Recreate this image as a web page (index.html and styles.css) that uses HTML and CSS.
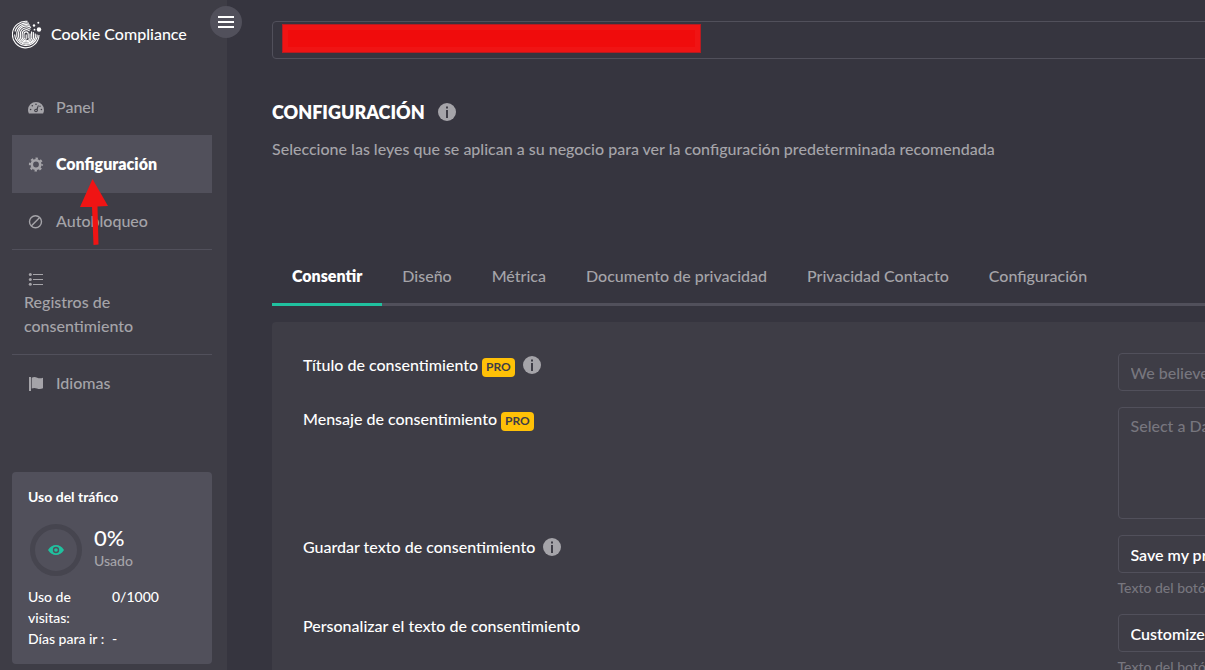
FILE: index.html
```html
<!DOCTYPE html>
<html lang="es">
  <head>
    <meta charset="UTF-8" />
    <meta name="viewport" content="width=device-width, initial-scale=1.0" />
    <title>Cookie Compliance</title>
    <link rel="stylesheet" href="styles.css" />
  </head>
  <body>
    <!-- shared icons -->
    <svg class="sprite" aria-hidden="true">
      <symbol id="icon-info" viewBox="0 0 18 18">
        <circle cx="9" cy="9" r="9" fill="#a5a4a9" />
        <path d="M8 3.500h2v2H8zM8 7h2v8H8z" fill="#3e3d46" />
      </symbol>
    </svg>

    <div class="layout">
      <aside class="sidebar">
        <div class="brand">
          <svg class="brand-logo" viewBox="0 0 30 30" fill="none" stroke="#fff" stroke-width="1.100">
            <path d="M15.500 2.400A13.300 13.300 0 1 0 27 16" />
            <path d="M17 4.300A11.500 11.500 0 0 0 3 12.500M2.600 15.500A11.500 11.500 0 0 0 25.200 18L25 15.500" />
            <path d="M18 6.300A9.600 9.600 0 0 0 4.800 13.500v4A9.600 9.600 0 0 0 23.400 18.500L23.200 14.500" />
            <path d="M19 8.500A7.800 7.800 0 0 0 6.600 13.500v4.500A7.800 7.800 0 0 0 21.600 19L21.300 13" />
            <path d="M18.500 10.400A6 6 0 0 0 8.400 14.500v4A6 6 0 0 0 19.800 19L19.500 12.500" />
            <path d="M17.600 12.200A4.200 4.200 0 0 0 10.200 15v3.500A4.200 4.200 0 0 0 18 19.500V14.500" />
            <path d="M16.200 19.500v-4.500a2.100 2.100 0 0 0-4.200 0V18.500a1.500 1.500 0 0 0 2.200 1.500V15.500" />
            <g fill="#fff" stroke="none">
              <circle cx="27" cy="10.500" r="2.200" />
              <circle cx="22" cy="6.500" r="1.200" />
              <circle cx="26.300" cy="3.800" r="1" />
              <circle cx="22.500" cy="10.700" r=".9" />
            </g>
          </svg>
          <span>Cookie Compliance</span>
        </div>

        <button class="menu-toggle" type="button" aria-label="Menú">
          <svg viewBox="0 0 16 12" fill="#fff">
            <path d="M0 0h16v2H0zM0 5h16v2H0zM0 10h16v2H0z" />
          </svg>
        </button>

        <nav class="side-nav">
          <a class="nav-item" href="#">
            <svg class="nav-icon" viewBox="0 0 16 16">
              <path d="M8 3a8 8 0 0 0-8 8c0 1.300.3 2.400.9 3.400h14.200c.6-1 .9-2.100.9-3.400a8 8 0 0 0-8-8z" fill="currentColor" />
              <g fill="#3e3d46">
                <circle cx="8" cy="5.300" r=".8" />
                <circle cx="4.300" cy="6.800" r=".8" />
                <circle cx="2.600" cy="10.500" r=".8" />
                <circle cx="13.400" cy="10.500" r=".8" />
                <circle cx="12" cy="7.200" r=".7" />
                <circle cx="8" cy="11.500" r="1.800" />
                <path d="M8 11l2-4.700.8.300-1.500 5z" />
              </g>
              <circle cx="8" cy="11.500" r=".8" fill="currentColor" />
            </svg>
            <span>Panel</span>
          </a>
          <a class="nav-item active" href="#" aria-current="page">
            <svg class="nav-icon" viewBox="0 0 16 16" fill="none" stroke="currentColor">
              <circle cx="8" cy="8.500" r="4.200" stroke-width="2.600" />
              <circle cx="8" cy="8.500" r="6.100" stroke-width="2" stroke-dasharray="2.400 2.391" stroke-dashoffset="1.200" />
            </svg>
            <span>Configuración</span>
          </a>
          <a class="nav-item divided" href="#">
            <svg class="nav-icon" viewBox="0 0 16 16" fill="none" stroke="currentColor" stroke-width="1.400">
              <circle cx="7.500" cy="8.800" r="6" />
              <path d="M3.300 13l8.400-8.400" />
            </svg>
            <span>Autobloqueo</span>
          </a>
          <a class="nav-item nav-item-wrap divided" href="#">
            <svg class="nav-icon" viewBox="0 0 16 16" fill="currentColor">
              <circle cx="2.300" cy="3.500" r="1.500" />
              <circle cx="2.300" cy="8.500" r="1.500" />
              <circle cx="2.300" cy="13.300" r="1.500" />
              <path d="M5 3h10v1H5zM5 8h10v1H5zM5 13h10v1H5z" />
            </svg>
            <span>Registros de consentimiento</span>
          </a>
          <a class="nav-item" href="#">
            <svg class="nav-icon" viewBox="0 0 16 16" fill="currentColor">
              <path d="M1 2h2v14H1zM3.700 2.700c2-1 4-.7 5.500.1 2 .9 4 .6 5.800 0v10.500c-2 .9-4 1.100-6 .2-1.800-.8-3.600-.8-5.300 0z" />
            </svg>
            <span>Idiomas</span>
          </a>

          <svg class="pointer-arrow" viewBox="0 0 28 66" fill="#f01414" aria-hidden="true">
            <path d="M12.500 0L28 27 17.500 27.500 18.500 65.500 13.500 66 12 28 0 28z" />
          </svg>
        </nav>

        <section class="usage">
          <h2>Uso del tráfico</h2>
          <div class="usage-meter">
            <div class="usage-ring">
              <svg viewBox="0 0 16 10">
                <path d="M0 5C2 1.500 5 0 8 0s6 1.500 8 5c-2 3.500-5 5-8 5S2 8.500 0 5z" fill="#20c19f" />
                <circle cx="8" cy="5" r="2.500" fill="none" stroke="#51505b" stroke-width="1.400" />
              </svg>
            </div>
            <div class="usage-value">
              <strong>0%</strong>
              <span>Usado</span>
            </div>
          </div>
          <dl class="usage-list">
            <dt>Uso de visitas:</dt>
            <dd>0/1000</dd>
            <dt>Días para ir :</dt>
            <dd>-</dd>
          </dl>
        </section>
      </aside>

      <main class="main">
        <div class="content">
          <div class="site-box">
            <div class="redacted"></div>
          </div>

          <header class="page-header">
            <h1>
              CONFIGURACIÓN
              <svg class="info"><use href="#icon-info" /></svg>
            </h1>
            <p>Seleccione las leyes que se aplican a su negocio para ver la configuración predeterminada recomendada</p>
          </header>

          <nav class="tabs">
            <a class="tab active" href="#">Consentir</a>
            <a class="tab" href="#">Diseño</a>
            <a class="tab" href="#">Métrica</a>
            <a class="tab" href="#">Documento de privacidad</a>
            <a class="tab" href="#">Privacidad Contacto</a>
            <a class="tab" href="#">Configuración</a>
          </nav>

          <form class="panel">
            <div class="field">
              <div class="field-label">
                <label for="consentTitle">Título de consentimiento</label>
                <span class="badge">PRO</span>
                <svg class="info"><use href="#icon-info" /></svg>
              </div>
              <div class="field-control">
                <input type="text" id="consentTitle" placeholder="We believe" />
              </div>
            </div>

            <div class="field">
              <div class="field-label">
                <label for="consentMessage">Mensaje de consentimiento</label>
                <span class="badge">PRO</span>
              </div>
              <div class="field-control">
                <textarea id="consentMessage" placeholder="Select a Data"></textarea>
              </div>
            </div>

            <div class="field">
              <div class="field-label">
                <label for="saveText">Guardar texto de consentimiento</label>
                <svg class="info"><use href="#icon-info" /></svg>
              </div>
              <div class="field-control">
                <input type="text" id="saveText" value="Save my preferences" />
                <small>Texto del botón</small>
              </div>
            </div>

            <div class="field">
              <div class="field-label">
                <label for="customizeText">Personalizar el texto de consentimiento</label>
              </div>
              <div class="field-control">
                <input type="text" id="customizeText" value="Customize" />
                <small>Texto del botón</small>
              </div>
            </div>
          </form>
        </div>
      </main>
    </div>
  </body>
</html>
```
FILE: styles.css
```css
* {
  box-sizing: border-box;
}

body {
  margin: 0;
  font-family: Lato, "Liberation Sans", sans-serif;
  font-size: 16px;
  font-weight: 500;
  line-height: 24px;
  color: #fff;
  background-color: #36353f;
}

a {
  color: inherit;
  text-decoration: none;
}

.sprite {
  display: none;
}

.layout {
  display: flex;
  height: 100vh;
  overflow: hidden;
}

/* sidebar */
.sidebar {
  position: relative;
  flex: 0 0 227px;
  padding: 18px 15px 0 12px;
  background-color: #3e3d46;
}

.brand {
  display: flex;
  align-items: center;
  gap: 9px;
  height: 32px;
}

.brand-logo {
  width: 30px;
  height: 30px;
}

.menu-toggle {
  position: absolute;
  top: 6px;
  right: -15px;
  display: flex;
  align-items: center;
  justify-content: center;
  width: 32px;
  height: 32px;
  padding: 0;
  border: none;
  border-radius: 50%;
  background-color: #51505b;
  cursor: pointer;
}

.menu-toggle svg {
  width: 16px;
  height: 12px;
}

.side-nav {
  position: relative;
  margin-top: 29px;
}

.nav-item {
  display: flex;
  align-items: center;
  gap: 12px;
  padding: 16px;
  color: #a5a4a9;
}

.nav-item.active {
  height: 58px;
  background-color: #51505b;
}

.nav-item.active span {
  font-weight: 800;
  color: #fff;
}

.nav-item.divided {
  border-bottom: 1px solid #51505b;
}

.nav-item-wrap {
  flex-direction: column;
  align-items: flex-start;
  gap: 3px;
  padding: 21px 12px 16px;
}

.nav-icon {
  flex: none;
  width: 16px;
  height: 16px;
}

.nav-item-wrap .nav-icon {
  margin-left: 4px;
}

.pointer-arrow {
  position: absolute;
  top: 100px;
  left: 68px;
  width: 28px;
  height: 66px;
}

.usage {
  margin-top: 61px;
  padding: 13px 16px 15px;
  border-radius: 4px;
  background-color: #51505b;
  font-size: 14px;
  line-height: 21px;
}

.usage h2 {
  margin: 0;
  font-size: 14px;
  line-height: 24px;
}

.usage-meter {
  display: flex;
  align-items: center;
  gap: 12px;
  margin: 15px 0 10px 2px;
}

.usage-ring {
  display: flex;
  align-items: center;
  justify-content: center;
  width: 52px;
  height: 52px;
  border: 5px solid #46454f;
  border-radius: 50%;
}

.usage-ring svg {
  width: 16px;
  height: 10px;
}

.usage-value {
  padding-bottom: 4px;
}

.usage-value strong {
  display: block;
  font-size: 22px;
  font-weight: 500;
  line-height: 24px;
}

.usage-value span {
  color: #a5a4a9;
}

.usage-list {
  display: grid;
  grid-template-columns: 84px 1fr;
  margin: 0;
}

.usage-list dd {
  margin: 0;
}

/* main area, the content runs on past the right edge */
.main {
  flex: 1;
  min-width: 0;
  overflow: hidden;
  padding: 21px 0 0 45px;
}

.content {
  margin-right: -758px;
}

.site-box {
  height: 38px;
  padding: 2px 9px;
  border: 1px solid #51505b;
  border-radius: 4px;
}

.redacted {
  width: 419px;
  height: 29px;
  border: 1px solid #b51c22;
  background-color: #f00c0c;
  box-shadow: inset 0 0 0 5px #f01414;
}

.page-header {
  margin-top: 41px;
}

.page-header h1 {
  display: flex;
  align-items: center;
  gap: 13px;
  margin: 0;
  font-size: 18px;
  font-weight: 800;
  line-height: 24px;
}

.page-header p {
  margin: 13px 0 0;
  color: #a5a4a9;
}

.info {
  flex: none;
  width: 18px;
  height: 18px;
}

.tabs {
  display: flex;
  margin-top: 87px;
  border-bottom: 3px solid #51505b;
}

.tab {
  margin-bottom: -3px;
  padding: 16px 20px 15px;
  border-bottom: 3px solid transparent;
  color: #a5a4a9;
}

.tab.active {
  border-bottom-color: #20c19f;
  font-weight: 800;
  color: #fff;
}

.panel {
  margin-top: 16px;
  padding: 31px;
  border-radius: 4px;
  background-color: #3e3d46;
}

.field {
  display: grid;
  grid-template-columns: 1fr 1fr;
  margin-bottom: 16px;
}

.field-label {
  display: flex;
  align-items: center;
  gap: 4px;
  height: 24px;
}

.field-label .info {
  margin-left: 4px;
}

.badge {
  margin-top: 4px;
  padding: 0 4px 2px;
  border-radius: 4px;
  background-color: #ffc107;
  color: #3e3d46;
  font-size: 12px;
  font-weight: 700;
  line-height: 17px;
}

.field-control input,
.field-control textarea {
  display: block;
  width: 100%;
  height: 38px;
  padding: 6px 12px;
  border: 1px solid #51505b;
  border-radius: 4px;
  background-color: transparent;
  color: #fff;
  font: inherit;
  font-weight: 600;
}

.field-control textarea {
  height: 112px;
  resize: none;
}

.field-control ::placeholder {
  color: #77767e;
  font-weight: 500;
}

.field-control small {
  display: block;
  margin-top: 4px;
  color: #77767e;
  font-size: 14px;
  line-height: 21px;
}
```
